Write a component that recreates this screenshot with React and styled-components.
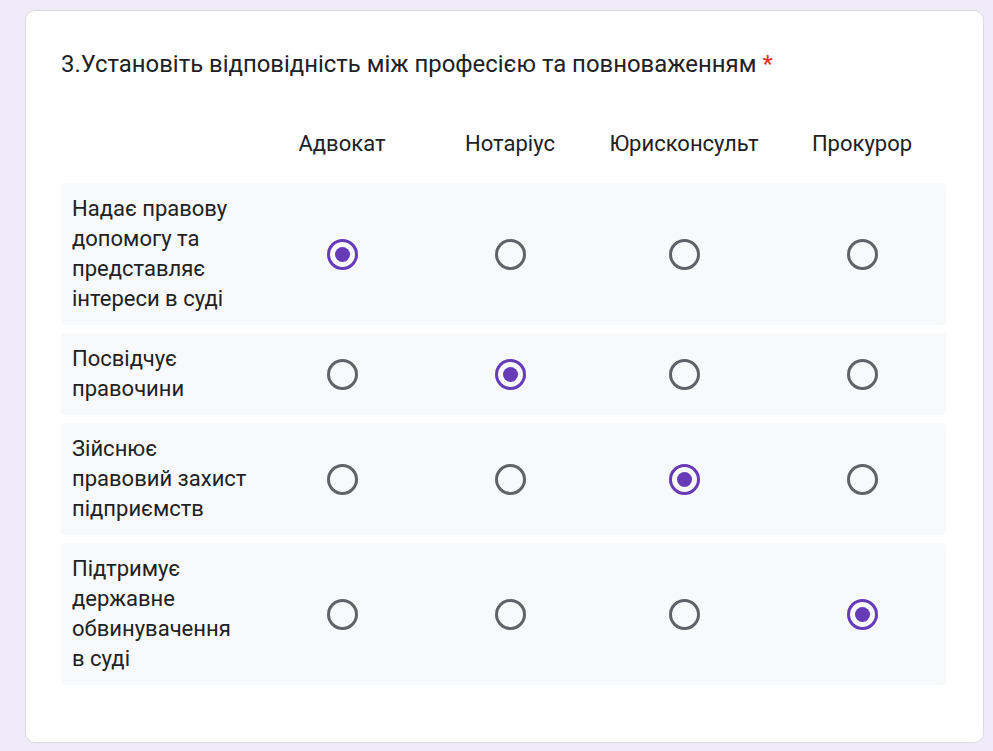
import React from "react";
import styled, { createGlobalStyle } from "styled-components";

const Global = createGlobalStyle`
  html, body { margin: 0; padding: 0; background: #f0ebf8; }
  body { font-family: Roboto, "Noto Sans", Arial, sans-serif; color: #202124; }
`;

const Page = styled.div`
  padding: 10px 9px 8px 25px;
  box-sizing: border-box;
  width: 993px;
`;

const Card = styled.div`
  background: #fff;
  border: 1px solid #dadce0;
  border-radius: 10px;
  padding: 37px 37px 57px 35px;
  box-sizing: border-box;
  width: 959px;
`;

const Title = styled.div`
  font-size: 23.9px;
  line-height: 32px;
  color: #202124;
  white-space: nowrap;
`;

const Star = styled.span`
  color: #d93025;
  margin-left: 6px;
`;

const Grid = styled.div`
  margin-top: 31px;
  display: flex;
  flex-direction: column;
  gap: 8px;
`;

const cols = "193px 176px 160px 188px 168px";

const HeaderRow = styled.div`
  display: grid;
  grid-template-columns: ${cols};
  height: 64px;
  align-items: center;
`;

const ColLabel = styled.div`
  text-align: center;
  font-size: 22px;
  color: #202124;
`;

const Row = styled.div`
  display: grid;
  grid-template-columns: ${cols};
  align-items: center;
  background: #f8f9fa;
  border-radius: 4px;
  padding: 11px 0;
`;

const RowLabel = styled.div`
  padding-left: 11px;
  padding-right: 4px;
  font-size: 22px;
  line-height: 30px;
  color: #202124;
  white-space: nowrap;
`;

const Cell = styled.div`
  display: flex;
  justify-content: center;
`;

const Radio = styled.div`
  width: 31px;
  height: 31px;
  box-sizing: border-box;
  border-radius: 50%;
  border: 3px solid ${(p) => (p.$checked ? "#673ab7" : "#5f6368")};
  display: flex;
  align-items: center;
  justify-content: center;
  &::after {
    content: "";
    width: 15px;
    height: 15px;
    border-radius: 50%;
    background: #673ab7;
    display: ${(p) => (p.$checked ? "block" : "none")};
  }
`;

const columns = ["Адвокат", "Нотаріус", "Юрисконсульт", "Прокурор"];
const rows = [
  { label: ["Надає правову", "допомогу та", "представляє", "інтереси в суді"], sel: 0 },
  { label: ["Посвідчує", "правочини"], sel: 1 },
  { label: ["Зійснює", "правовий захист", "підприємств"], sel: 2 },
  { label: ["Підтримує", "державне", "обвинувачення", "в суді"], sel: 3 },
];

export default function App() {
  return (
    <>
      <Global />
      <Page>
        <Card>
          <Title>
            3.Установіть відповідність між професією та повноваженням<Star>*</Star>
          </Title>
          <Grid>
            <HeaderRow>
              <div />
              {columns.map((c) => (
                <ColLabel key={c}>{c}</ColLabel>
              ))}
            </HeaderRow>
            {rows.map((r, i) => (
              <Row key={i}>
                <RowLabel>
                  {r.label.map((l, j) => (
                    <div key={j}>{l}</div>
                  ))}
                </RowLabel>
                {columns.map((c, k) => (
                  <Cell key={c}>
                    <Radio $checked={k === r.sel} />
                  </Cell>
                ))}
              </Row>
            ))}
          </Grid>
        </Card>
      </Page>
    </>
  );
}
